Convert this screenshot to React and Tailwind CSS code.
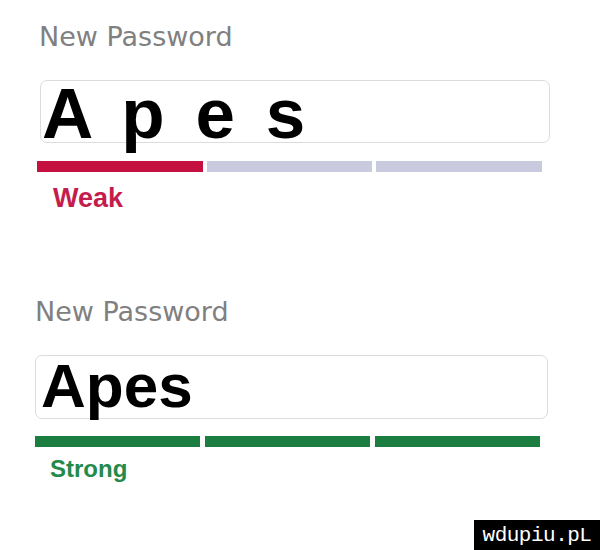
export default function App() {
  const label = 'text-[27px] leading-none text-[#808080] font-["DejaVu_Sans",sans-serif]'
  return (
    <div className="relative w-[600px] h-[550px] bg-white overflow-hidden font-['Liberation_Sans',Arial,sans-serif]">
      {/* weak */}
      <div className="flex flex-col pt-[23px]">
        <div className={`${label} ml-[39px]`}>New Password</div>
        <div className="ml-[40px] mt-[30px] w-[510px] h-[63px] border border-[#dcdcdf] rounded-[7px]">
          <div className="-mt-[3px] pl-[1px] text-[71px] leading-none font-bold text-black tracking-[5.5px] whitespace-pre">
            A p e s
          </div>
        </div>
        <div className="ml-[37px] mt-[18px] w-[505px] h-[11px] flex gap-[4px]">
          <div className="flex-1 bg-[#c5113f]" />
          <div className="flex-1 bg-[#c9cadd]" />
          <div className="flex-1 bg-[#c9cadd]" />
        </div>
        <div className="ml-[53px] mt-[13px] text-[27px] leading-none font-bold text-[#c41c4c]">Weak</div>
      </div>

      {/* strong */}
      <div className="flex flex-col mt-[86px]">
        <div className={`${label} ml-[35px]`}>New Password</div>
        <div className="ml-[35px] mt-[30px] w-[513px] h-[64px] border border-[#dcdcdf] rounded-[7px]">
          <div className="-mt-[1px] pl-[5px] text-[62px] leading-none font-bold text-black">Apes</div>
        </div>
        <div className="ml-[35px] mt-[17px] w-[505px] h-[11px] flex gap-[5px]">
          <div className="flex-1 bg-[#1c7d41]" />
          <div className="flex-1 bg-[#1c7d41]" />
          <div className="flex-1 bg-[#1c7d41]" />
        </div>
        <div className="ml-[50px] mt-[10px] text-[24px] leading-none font-bold text-[#238a4c]">Strong</div>
      </div>

      {/* watermark */}
      <div className="absolute left-[474px] top-[520px] w-[126px] h-[30px] bg-black flex items-center justify-center">
        <span className="text-white text-[21px] leading-none font-['Liberation_Mono',monospace] tracking-[-0.5px]">wdupiu.pL</span>
      </div>
    </div>
  )
}
